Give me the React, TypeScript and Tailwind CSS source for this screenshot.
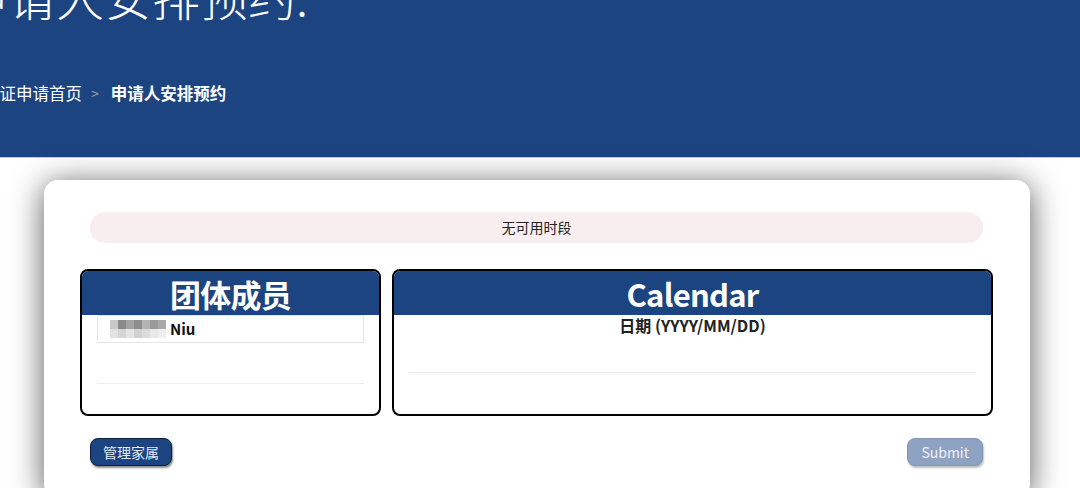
import React from 'react';

const cjk = { fontFamily: '"Noto Sans CJK SC", "Noto Sans", sans-serif' };

// blurred-out name, drawn as a small mosaic
const mosaicTop = ['#c9c9c9', '#8b8b8b', '#a3a3a3', '#8e8e8e', '#b4b4b4', '#9b9b9b', '#a9a9a9'];
const mosaicBottom = ['#e2e2e2', '#d5d5d5', '#e5e5e5', '#d1d1d1', '#dcdcdc', '#e7e7e7', '#efefef'];

function Mosaic() {
  return (
    <div className="flex flex-col blur-[0.6px]">
      <div className="flex">
        {mosaicTop.map((c, i) => (
          <div key={i} className="w-[8px] h-[9px]" style={{ background: c }} />
        ))}
      </div>
      <div className="flex">
        {mosaicBottom.map((c, i) => (
          <div key={i} className="w-[8px] h-[9px]" style={{ background: c }} />
        ))}
      </div>
    </div>
  );
}

function PanelHeader({ title }: { title: string }) {
  return (
    <div className="h-[44px] bg-[#1b4480] flex items-center justify-center">
      <span className="text-white text-[31px] font-bold leading-none tracking-tight">{title}</span>
    </div>
  );
}

export default function App() {
  return (
    <main className="w-[1080px] h-[488px] overflow-hidden bg-white" style={cjk}>
      {/* Page header */}
      <header className="h-[158px] bg-[#1b4480] border-b border-[#c9cdd6] overflow-hidden">
        <h1 className="ml-[-40px] mt-[-30px] text-[48px] leading-[50px] font-light text-white whitespace-nowrap">
          申请人安排预约.
        </h1>
        <nav className="ml-[-17px] mt-[61px] flex items-center text-[16.5px] leading-6 whitespace-nowrap">
          <span className="text-white">签证申请首页</span>
          <span className="pl-[9px] pr-[12px] text-[#9aa3b3] text-[14px]">&gt;</span>
          <span className="text-white font-bold">申请人安排预约</span>
        </nav>
      </header>

      {/* Appointment card */}
      <section className="px-[44px] pt-[22px]">
        <div className="w-[986px] bg-white rounded-[14px] shadow-[0_4px_32px_rgba(0,0,0,0.65)] pl-[36px] pr-[37px] pt-[32px] pb-8">
          <div className="mx-[10px] h-[31px] rounded-full bg-[#f8eeef] flex items-center justify-center text-[14px] text-[#222]">
            无可用时段
          </div>

          <div className="mt-[26px] grid grid-cols-[301px_1fr] gap-[11px]">
            {/* Group members */}
            <div className="h-[147px] border-2 border-black rounded-[8px] overflow-hidden">
              <PanelHeader title="团体成员" />
              <div className="px-[15px]">
                <div className="h-[28px] border border-[#e4e4e4] flex items-center pl-[12px] gap-[4px]">
                  <Mosaic />
                  <span className="text-[15px] font-bold text-[#111]">Niu</span>
                </div>
                <div className="mt-[40px] border-t border-[#eeeeee]" />
              </div>
            </div>

            {/* Calendar */}
            <div className="h-[147px] border-2 border-black rounded-[8px] overflow-hidden">
              <PanelHeader title="Calendar" />
              <div className="px-[15px]">
                <p className="text-center text-[16px] font-bold leading-5 text-[#222]">日期 (YYYY/MM/DD)</p>
                <div className="mt-[37px] border-t border-[#eeeeee]" />
              </div>
            </div>
          </div>

          <div className="mx-[10px] mt-[22px] flex items-center justify-between">
            <button className="h-[28px] px-[12px] rounded-[8px] bg-[#1b4480] border border-[#0c1f3d] text-[14px] text-[#e4e9f2] shadow-[1px_2px_2px_rgba(0,0,0,0.45)]">
              管理家属
            </button>
            <button className="h-[28px] px-[13px] rounded-[8px] bg-[#8ea3c3] border border-[#8096b8] text-[14px] text-[#eef2f8] shadow-[1px_2px_2px_rgba(0,0,0,0.25)]">
              Submit
            </button>
          </div>
        </div>
      </section>
    </main>
  );
}
